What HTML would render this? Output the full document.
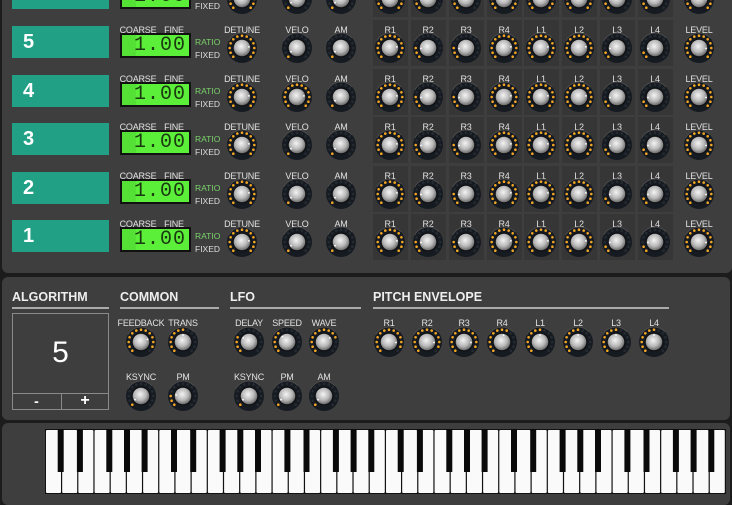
<!DOCTYPE html>
<html><head><meta charset="utf-8"><style>
*{margin:0;padding:0;box-sizing:border-box}
body{width:732px;height:503px;overflow:hidden;background:#1c1c1c;position:relative;font-family:"Liberation Sans",sans-serif}
.p{position:absolute;background:#3e3e3e;border-radius:6px}
.a{position:absolute}
.lb{position:absolute;font-size:9px;color:#e2e2e2;transform:translateX(-50%);white-space:nowrap;letter-spacing:-0.2px}
.teal{position:absolute;left:12px;width:97px;height:32px;background:#22a085;color:#fff;font-weight:bold;font-size:20px;padding-left:11px;line-height:32px}
.lcd{position:absolute;left:120px;width:71px;height:25px;background:#5cef3a;border:2px solid #111;font-family:"Liberation Mono",monospace;font-size:20px;color:#1a3a10;text-align:right;padding-right:3px;line-height:21px;letter-spacing:1px}
.lcd:before{content:"";position:absolute;left:0;top:0;width:14px;height:100%;background:#54e034}
.cell{position:absolute;width:35px;background:#363636}
.h{position:absolute;font-size:12.5px;font-weight:bold;color:#eee;border-bottom:2px solid #aaa;padding-bottom:3px}
</style></head><body>
<div class="p" style="left:2px;top:-10px;width:730px;height:283px"></div>
<div class="p" style="left:2px;top:277px;width:728px;height:143px"></div>
<div class="p" style="left:2px;top:423px;width:728px;height:82px"></div>
<div id="c"></div>
<div class="h" style="left:12px;top:290px;width:97px">ALGORITHM</div>
<div class="h" style="left:120px;top:290px;width:99px">COMMON</div>
<div class="h" style="left:230px;top:290px;width:131px">LFO</div>
<div class="h" style="left:373px;top:290px;width:296px">PITCH ENVELOPE</div>
<div class="a" style="left:12px;top:313px;width:97px;height:97px;border:1px solid #8a8a8a"></div>
<div class="a" style="left:12px;top:393px;width:97px;height:1px;background:#8a8a8a"></div>
<div class="a" style="left:61px;top:393px;width:1px;height:17px;background:#8a8a8a"></div>
<div class="a" style="left:12px;top:336px;width:97px;text-align:center;color:#fff;font-size:30px">5</div>
<div class="a" style="left:12px;top:393px;width:49px;text-align:center;color:#fff;font-size:14px;font-weight:bold">-</div>
<div class="a" style="left:61px;top:392px;width:48px;text-align:center;color:#fff;font-size:16px;font-weight:bold">+</div>
<svg class="a" style="left:45px;top:429px" width="681" height="65" id="kb"></svg>
<script>
var c=document.getElementById('c'),H='';
function knob(x,y,v,ind){
 var s='<svg class="a" style="left:'+(x-16)+'px;top:'+(y-16)+'px" width="32" height="32"><defs><radialGradient id="g" cx="45%" cy="40%" r="60%"><stop offset="0" stop-color="#f4f4f4"/><stop offset="0.6" stop-color="#b8b8b8"/><stop offset="1" stop-color="#6a6a6a"/></radialGradient></defs>';
 s+='<circle cx="16" cy="16" r="15" fill="#161b22"/><circle cx="16" cy="16" r="15" fill="none" stroke="#4a4a4a" stroke-width="1" stroke-dasharray="30 70" pathLength="100" transform="rotate(-150 16 16)"/>';
 var n=13;
 for(var i=0;i<n;i++){var a=(225-i*270/(n-1))*Math.PI/180;var px=16+12.3*Math.cos(a),py=16-12.3*Math.sin(a);
  s+='<circle cx="'+px.toFixed(1)+'" cy="'+py.toFixed(1)+'" r="1.3" fill="'+(i<v*n?'#f5a623':'#262b32')+'"/>';}
 s+='<circle cx="16" cy="16" r="9.5" fill="#0d0f12"/><circle cx="16" cy="16" r="8.3" fill="url(#g)"/>';
 var a2=(225-(ind==null?v:ind)*270)*Math.PI/180;
 s+='<circle cx="'+(16+7*Math.cos(a2)).toFixed(1)+'" cy="'+(16-7*Math.sin(a2)).toFixed(1)+'" r="0.9" fill="#fff"/></svg>';
 H+=s;}
function lb(x,y,t){H+='<div class="lb" style="left:'+x+'px;top:'+y+'px">'+t+'</div>';}
var ex=[390,428,466,504,541,579,617,655],en=['R1','R2','R3','R4','L1','L2','L3','L4'];
var vals=[1,.2,.2,1,1,1,.1,.1];
for(var k=-1;k<5;k++){
 var y=Math.round(25+k*48.6);
 for(var j=0;j<8;j++)H+='<div class="cell" style="left:'+(ex[j]-17)+'px;top:'+(y-5)+'px;height:46px"></div>';
}
for(var k=-1;k<5;k++){
 var y=Math.round(25+k*48.6);
 H+='<div class="teal" style="top:'+(y+1)+'px">'+(5-k)+'</div>';
 H+='<div class="lcd" style="top:'+(y+8)+'px"><span style="position:relative">1.00</span></div>';
 lb(138,y,'COARSE');lb(174,y,'FINE');lb(242,y,'DETUNE');lb(297,y,'VELO');lb(341,y,'AM');lb(699,y,'LEVEL');
 H+='<div class="a" style="left:195px;top:'+(y+12)+'px;font-size:8.5px;color:#7bd36a">RATIO</div><div class="a" style="left:195px;top:'+(y+25)+'px;font-size:8.5px;color:#ddd">FIXED</div>';
 knob(242,y+23,1,.8);knob(297,y+23,k==1?1:0.05,k==1?.8:0.05);knob(341,y+23,0.05);
 for(var j=0;j<8;j++){lb(ex[j],y,en[j]);knob(ex[j],y+23,vals[j],vals[j]>.5?.8:.15);}
 knob(699,y+23,1,.85);
}
lb(141,318,'FEEDBACK');lb(183,318,'TRANS');knob(141,342,.85,.75);knob(183,342,.5);
lb(141,372,'KSYNC');lb(183,372,'PM');knob(141,396,.05);knob(183,396,.2);
lb(249,318,'DELAY');lb(287,318,'SPEED');lb(324,318,'WAVE');knob(249,342,.3);knob(287,342,.35);knob(324,342,.7);
lb(249,372,'KSYNC');lb(287,372,'PM');lb(324,372,'AM');knob(249,396,.05);knob(287,396,.05);knob(324,396,.05);
var pv=[.85,.85,.85,.55,.5,.5,.5,.5];
for(var j=0;j<8;j++){var x=[389,427,464,502,540,578,616,654][j];lb(x,318,en[j]);knob(x,342,pv[j]);}
c.innerHTML=H;
var kb='<rect width="681" height="65" fill="#111"/>',w=680/42;
for(var i=0;i<42;i++)kb+='<rect x="'+(1+i*w).toFixed(2)+'" y="1" width="'+(w-1.2).toFixed(2)+'" height="63" rx="1" fill="#fafafa"/>';
var off={0:1,1:1,3:1,4:1,5:1};
for(var o=0;o<6;o++)for(var n=0;n<7;n++)if(off[n]){var x=1+(o*7+n+1)*w-3+(n==0||n==3?-1.5:n==1||n==5?1.5:0);kb+='<rect x="'+x.toFixed(1)+'" y="0" width="6" height="43" fill="#0a0a0a"/>';}
document.getElementById('kb').innerHTML=kb;
</script>
</body></html>
